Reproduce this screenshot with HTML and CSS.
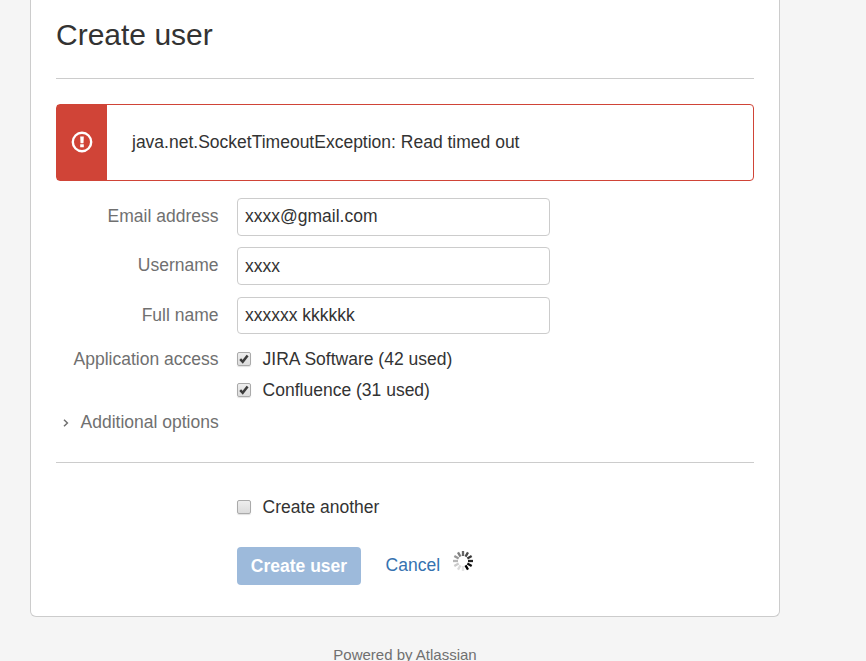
FILE: index.html
```html
<!DOCTYPE html>
<html lang="en">
<head>
    <meta charset="UTF-8">
    <meta name="viewport" content="width=device-width, initial-scale=1.0">
    <title>Create user</title>
    <link rel="stylesheet" href="styles.css">
</head>
<body>
    <main class="panel">
        <h1>Create user</h1>

        <div class="message error">
            <div class="message-icon">
                <svg width="22" height="22" viewBox="0 0 22 22">
                    <circle cx="11" cy="11" r="9.2" fill="none" stroke="#fff" stroke-width="2.4"/>
                    <path d="M9.2 5.4h3.6l-.3 6.9H9.5zM9.2 13.3h3.6v2.9H9.2z" fill="#fff"/>
                </svg>
            </div>
            <p>java.net.SocketTimeoutException: Read timed out</p>
        </div>

        <form onsubmit="return false">
            <div class="field-group">
                <label for="email">Email address</label>
                <input class="text email" type="text" id="email" value="xxxx@gmail.com">
            </div>
            <div class="field-group username">
                <label for="username">Username</label>
                <input class="text" type="text" id="username" value="xxxx">
            </div>
            <div class="field-group fullname">
                <label for="fullname">Full name</label>
                <input class="text" type="text" id="fullname" value="xxxxxx kkkkkk">
            </div>

            <div class="access">
                <span class="legend">Application access</span>
                <div class="options">
                    <label class="option"><input type="checkbox" checked><svg class="box" viewBox="0 0 12 12"><path d="M2.2 6.2l2.5 2.6 4.9-6.4" /></svg>JIRA Software (42 used)</label>
                    <label class="option"><input type="checkbox" checked><svg class="box" viewBox="0 0 12 12"><path d="M2.2 6.2l2.5 2.6 4.9-6.4" /></svg>Confluence (31 used)</label>
                </div>
            </div>

            <div class="more">
                <svg width="6" height="8" viewBox="0 0 6 8"><path d="M1 .7L4.4 4 1 7.3" fill="none" stroke="#707070" stroke-width="1.5"/></svg>
                <span>Additional options</span>
            </div>

            <div class="form-footer">
                <label class="option"><input type="checkbox"><svg class="box" viewBox="0 0 12 12"><path d="M2.2 6.2l2.5 2.6 4.9-6.4" /></svg>Create another</label>
                <div class="buttons">
                    <button type="submit" disabled>Create user</button>
                    <a href="#">Cancel</a>
                    <svg class="spinner" width="22" height="22" viewBox="-11 -11 22 22">
                        <path d="M0-5V-10" transform="rotate(150)"/>
                        <path d="M0-5V-10" transform="rotate(120)" opacity=".95"/>
                        <path d="M0-5V-10" transform="rotate(90)" opacity=".86"/>
                        <path d="M0-5V-10" transform="rotate(60)" opacity=".78"/>
                        <path d="M0-5V-10" transform="rotate(30)" opacity=".7"/>
                        <path d="M0-5V-10" opacity=".6"/>
                        <path d="M0-5V-10" transform="rotate(330)" opacity=".5"/>
                        <path d="M0-5V-10" transform="rotate(300)" opacity=".4"/>
                        <path d="M0-5V-10" transform="rotate(270)" opacity=".28"/>
                        <path d="M0-5V-10" transform="rotate(240)" opacity=".2"/>
                        <path d="M0-5V-10" transform="rotate(210)" opacity=".14"/>
                        <path d="M0-5V-10" transform="rotate(180)" opacity=".1"/>
                    </svg>
                </div>
            </div>
        </form>
    </main>

    <footer>Powered by Atlassian</footer>
</body>
</html>
```

FILE: styles.css
```css
* {
    box-sizing: border-box;
}
body {
    margin: 0;
    height: 661px;
    overflow: hidden;
    background: #f5f5f5;
    color: #333;
    font-family: Arial, "Liberation Sans", sans-serif;
    font-size: 17.5px;
    line-height: 25px;
}
.panel {
    width: 750px;
    height: 617px;
    margin-left: 30px;
    padding: 0 25px;
    background: #fff;
    border: 1px solid #ccc;
    border-top: none;
    border-radius: 0 0 6px 6px;
}
h1 {
    margin: 0 0 25px;
    height: 79px;
    padding-top: 17px;
    border-bottom: 1px solid #ccc;
    font-size: 30px;
    font-weight: normal;
    line-height: 35px;
}
.message {
    display: flex;
    height: 77px;
    margin-bottom: 17px;
    border: 1px solid #d04437;
    border-radius: 4px;
}
.message-icon {
    display: flex;
    align-items: center;
    justify-content: center;
    width: 50px;
    padding-bottom: 2px;
    background: #d04437;
}
.message p {
    margin: 25px 0 0 25px;
    color: #333;
}
.field-group {
    display: grid;
    grid-template-columns: 163px 313px;
    column-gap: 18px;
    height: 38px;
    margin-bottom: 11px;
}
.field-group label,
.legend {
    padding: 6px 0.5px 0 0;
    color: #707070;
    text-align: right;
}
.username {
    margin-bottom: 12px;
}
.fullname {
    height: 37px;
    margin-bottom: 8px;
}
.text {
    width: 313px;
    padding: 0 7px;
    background: #fff;
    border: 1px solid #ccc;
    border-radius: 4px;
    color: #333;
    font: inherit;
}
.email {
    padding-bottom: 2px;
}
.access {
    display: grid;
    grid-template-columns: 163px 1fr;
    column-gap: 18px;
}
.legend {
    padding-top: 5px;
}
.options {
    display: grid;
    gap: 6px;
    padding-top: 5px;
}
.option {
    display: flex;
    align-items: center;
}
.option input {
    width: 0;
    height: 0;
    margin: 0;
    appearance: none;
}
.box {
    width: 14px;
    height: 14px;
    margin: 0 11.6px 2px 0;
    background: linear-gradient(#eee, #dcdcdc);
    border: 1px solid #aaa;
    border-radius: 2px;
    box-shadow: 0 1px 1px rgba(0, 0, 0, 0.12);
}
.box path {
    display: none;
    fill: none;
    stroke: #3c3c3c;
    stroke-width: 2.5;
}
.option input:checked + .box path {
    display: block;
}
.more {
    display: flex;
    align-items: center;
    gap: 11.5px;
    height: 25px;
    margin-top: 7px;
    padding-left: 7px;
    color: #707070;
}
.form-footer {
    margin-top: 27px;
    padding: 32px 0 0 181px;
    border-top: 1px solid #ccc;
}
.buttons {
    display: flex;
    align-items: center;
    margin-top: 27px;
}
button {
    width: 124px;
    height: 38px;
    padding: 0;
    background: #9dbadb;
    border: none;
    border-radius: 4px;
    color: #fff;
    font: bold 17.5px/38px Arial, "Liberation Sans", sans-serif;
}
.buttons a {
    margin-left: 24.6px;
    padding-bottom: 2px;
    color: #3572b0;
    text-decoration: none;
}
.spinner {
    margin: -10px 0 0 12.4px;
}
.spinner path {
    stroke: #000;
    stroke-width: 2.3;
}
footer {
    margin-top: 25px;
    padding-right: 56px;
    color: #707070;
    font-size: 15px;
    text-align: center;
}
```
